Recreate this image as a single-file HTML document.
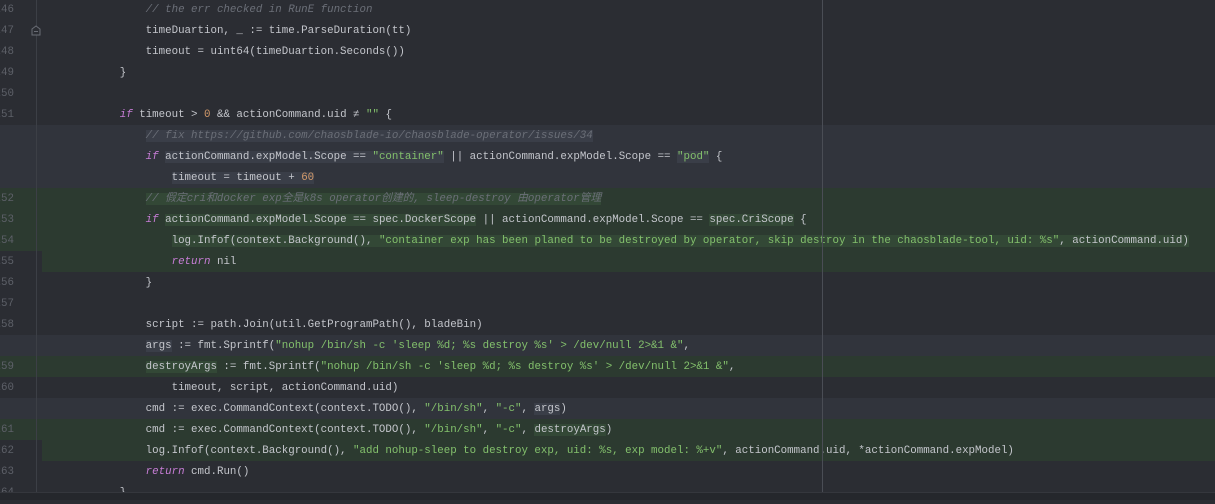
<!DOCTYPE html>
<html><head><meta charset="utf-8"><style>
body{margin:0;width:1215px;height:499px;background:#2b2d33;overflow:hidden;position:relative;font-family:"Liberation Mono","Noto Sans CJK SC",monospace;font-size:10.8px;color:#c4c6cc}
.l{position:absolute;left:0;width:1215px;height:21px;line-height:21px;white-space:pre}
.n{position:absolute;left:-8px;top:1px;width:22px;text-align:right;color:#5d6068}
.c{position:absolute;left:42px;top:1px}
.g{background:#31343c}
.gr{background:#2c3a30}
.grc{background:linear-gradient(to right,transparent 42px,#2c3a30 42px)}
.k{color:#c77dd6;font-style:italic}
.cm{color:#6b6f78;font-style:italic}
.s{color:#83c06c}
.num{color:#d39a6a}
.e{background:#3a3e48}
.eg{background:#334836}
#gut{position:absolute;left:36px;top:0;width:1px;height:492px;background:#3c3f46}
#guide{position:absolute;left:822px;top:0;width:1px;height:492px;background:#4a4d55}
#bot{position:absolute;left:0;top:492px;width:1215px;height:7px;background:#25272c;border-top:1px solid #35373d}
</style></head><body>
<div class="l" style="top:-1px"><span class="n">246</span><span class="c">                <span class="cm">// the err checked in RunE function</span></span></div>
<div class="l" style="top:20px"><span class="n">247</span><span class="c">                timeDuartion, _ := time.ParseDuration(tt)</span></div>
<div class="l" style="top:41px"><span class="n">248</span><span class="c">                timeout = uint64(timeDuartion.Seconds())</span></div>
<div class="l" style="top:62px"><span class="n">249</span><span class="c">            }</span></div>
<div class="l" style="top:83px"><span class="n">250</span></div>
<div class="l" style="top:104px"><span class="n">251</span><span class="c">            <span class="k">if</span> timeout &gt; <span class="num">0</span> &amp;&amp; actionCommand.uid ≠ <span class="s">""</span> {</span></div>
<div class="l g" style="top:125px"><span class="c">                <span class="cm e">// fix https://github.com/chaosblade-io/chaosblade-operator/issues/34</span></span></div>
<div class="l g" style="top:146px"><span class="c">                <span class="k">if</span> <span class="e">actionCommand.expModel.Scope == </span><span class="s e">"container"</span> || actionCommand.expModel.Scope == <span class="s e">"pod"</span> {</span></div>
<div class="l g" style="top:167px"><span class="c">                    <span class="e">timeout = timeout + <span class="num">60</span></span></span></div>
<div class="l gr" style="top:188px"><span class="n">252</span><span class="c">                <span class="cm eg">// 假定cri和docker exp全是k8s operator创建的, sleep-destroy 由operator管理</span></span></div>
<div class="l gr" style="top:209px"><span class="n">253</span><span class="c">                <span class="k">if</span> <span class="eg">actionCommand.expModel.Scope == spec.DockerScope</span> || actionCommand.expModel.Scope == <span class="eg">spec.CriScope</span> {</span></div>
<div class="l gr" style="top:230px"><span class="n">254</span><span class="c">                    <span class="eg">log.Infof(context.Background(), <span class="s">"container exp has been planed to be destroyed by operator, skip destroy in the chaosblade-tool, uid: %s"</span>, actionCommand.uid)</span></span></div>
<div class="l grc" style="top:251px"><span class="n">255</span><span class="c">                    <span class="k">return</span> nil</span></div>
<div class="l" style="top:272px"><span class="n">256</span><span class="c">                }</span></div>
<div class="l" style="top:293px"><span class="n">257</span></div>
<div class="l" style="top:314px"><span class="n">258</span><span class="c">                script := path.Join(util.GetProgramPath(), bladeBin)</span></div>
<div class="l g" style="top:335px"><span class="c">                <span class="e">args</span> := fmt.Sprintf(<span class="s">"nohup /bin/sh -c 'sleep %d; %s destroy %s' &gt; /dev/null 2&gt;&amp;1 &amp;"</span>,</span></div>
<div class="l gr" style="top:356px"><span class="n">259</span><span class="c">                <span class="eg">destroyArgs</span> := fmt.Sprintf(<span class="s">"nohup /bin/sh -c 'sleep %d; %s destroy %s' &gt; /dev/null 2&gt;&amp;1 &amp;"</span>,</span></div>
<div class="l" style="top:377px"><span class="n">260</span><span class="c">                    timeout, script, actionCommand.uid)</span></div>
<div class="l g" style="top:398px"><span class="c">                cmd := exec.CommandContext(context.TODO(), <span class="s">"/bin/sh"</span>, <span class="s">"-c"</span>, <span class="e">args</span>)</span></div>
<div class="l gr" style="top:419px"><span class="n">261</span><span class="c">                cmd := exec.CommandContext(context.TODO(), <span class="s">"/bin/sh"</span>, <span class="s">"-c"</span>, <span class="eg">destroyArgs</span>)</span></div>
<div class="l grc" style="top:440px"><span class="n">262</span><span class="c">                log.Infof(context.Background(), <span class="s">"add nohup-sleep to destroy exp, uid: %s, exp model: %+v"</span>, actionCommand.uid, *actionCommand.expModel)</span></div>
<div class="l" style="top:461px"><span class="n">263</span><span class="c">                <span class="k">return</span> cmd.Run()</span></div>
<div class="l" style="top:482px"><span class="n">264</span><span class="c">            }</span></div>
<div id="gut"></div>
<div id="guide"></div>
<svg style="position:absolute;left:31px;top:25px" width="10" height="11"><path d="M1 4 L5 1 L9 4 V10 H1 Z M3 6.5 H7" fill="#2b2d33" stroke="#6a6d75" stroke-width="1"/></svg>
<div id="bot"></div>
</body></html>
